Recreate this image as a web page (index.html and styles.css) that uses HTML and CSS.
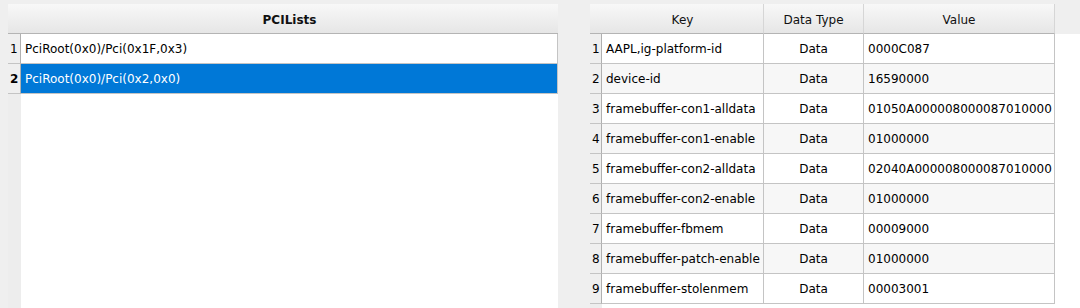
FILE: index.html
```html
<!DOCTYPE html>
<html>
<head>
<meta charset="utf-8">
<link rel="stylesheet" href="styles.css">
</head>
<body>
<div class="page">
  <div class="tbl left">
    <div class="hdr">
      <div class="corner"></div>
      <div class="hsec bold">PCILists</div>
    </div>
    <div class="body">
      <div class="row">
        <div class="vcell">1</div>
        <div class="cell">PciRoot(0x0)/Pci(0x1F,0x3)</div>
      </div>
      <div class="row sel">
        <div class="vcell cur">2</div>
        <div class="cell">PciRoot(0x0)/Pci(0x2,0x0)</div>
      </div>
    </div>
  </div>
  <div class="tbl right">
    <div class="hdr">
      <div class="corner"></div>
      <div class="hsec">Key</div>
      <div class="hsec">Data Type</div>
      <div class="hsec">Value</div>
      <div class="hfill"></div>
    </div>
    <div class="body">
      <div class="row"><div class="vcell">1</div><div class="cell">AAPL,ig-platform-id</div><div class="cell c">Data</div><div class="cell">0000C087</div></div>
      <div class="row alt"><div class="vcell">2</div><div class="cell">device-id</div><div class="cell c">Data</div><div class="cell">16590000</div></div>
      <div class="row"><div class="vcell">3</div><div class="cell">framebuffer-con1-alldata</div><div class="cell c">Data</div><div class="cell">01050A000008000087010000</div></div>
      <div class="row alt"><div class="vcell">4</div><div class="cell">framebuffer-con1-enable</div><div class="cell c">Data</div><div class="cell">01000000</div></div>
      <div class="row"><div class="vcell">5</div><div class="cell">framebuffer-con2-alldata</div><div class="cell c">Data</div><div class="cell">02040A000008000087010000</div></div>
      <div class="row alt"><div class="vcell">6</div><div class="cell">framebuffer-con2-enable</div><div class="cell c">Data</div><div class="cell">01000000</div></div>
      <div class="row"><div class="vcell">7</div><div class="cell">framebuffer-fbmem</div><div class="cell c">Data</div><div class="cell">00009000</div></div>
      <div class="row alt"><div class="vcell">8</div><div class="cell">framebuffer-patch-enable</div><div class="cell c">Data</div><div class="cell">01000000</div></div>
      <div class="row"><div class="vcell">9</div><div class="cell">framebuffer-stolenmem</div><div class="cell c">Data</div><div class="cell">00003001</div></div>
    </div>
  </div>
</div>
</body>
</html>
```
FILE: styles.css
```css
html, body {
  margin: 0;
  height: 100%;
}
body {
  background: #efefef;
  font-family: "DejaVu Sans", sans-serif;
  font-size: 12px;
  color: #000;
  overflow: hidden;
}
.page {
  display: flex;
  gap: 32px;
  height: 308px;
  padding: 4px 0 0 8px;
  box-sizing: border-box;
}
.tbl {
  display: flex;
  flex-direction: column;
  flex: none;
}
.left { width: 550px; }
.right { width: 490px; }

.hdr {
  display: grid;
  height: 30px;
  flex: none;
}
.left .hdr, .left .row { grid-template-columns: 13px 537px; }
.right .hdr { grid-template-columns: 12px 162px 100px 191px 1fr; }
.right .row { grid-template-columns: 12px 162px 100px 191px; }

.corner, .hsec {
  background: linear-gradient(#f8f8f8, #e6e6e6);
  border-bottom: 1px solid #b4b4b4;
  box-sizing: border-box;
}
.hsec {
  display: flex;
  align-items: center;
  justify-content: center;
  border-right: 1px solid #d6d6d6;
  color: #111;
  padding-top: 2px;
}
.hsec:last-of-type { border-right: none; }
.bold { font-weight: bold; }
.hfill { background: #efefef; }

.body {
  flex: 1;
  overflow: hidden;
  background: #fff;
}
.left .body { background: linear-gradient(to right, #ededed 13px, #fff 13px); }
.right .body { background: linear-gradient(to right, #ededed 12px, #fff 12px); }
.row {
  display: grid;
  height: 30px;
  background: #fff;
}
.row.alt .cell { background: #f7f7f7; }
.vcell, .cell {
  box-sizing: border-box;
  border-bottom: 1px solid #c4c4c4;
  border-right: 1px solid #c4c4c4;
  display: flex;
  align-items: center;
  white-space: nowrap;
  overflow: hidden;
  padding-top: 1px;
}
.vcell {
  background: #efefef;
  padding-left: 2px;
  border-right-color: #b0b0b0;
}
.vcell.cur { font-weight: bold; }
.cell { padding-left: 4px; }
.cell.c { justify-content: center; padding-left: 0; }
.sel .cell {
  background: #0078d7;
  color: #fff;
}
```
